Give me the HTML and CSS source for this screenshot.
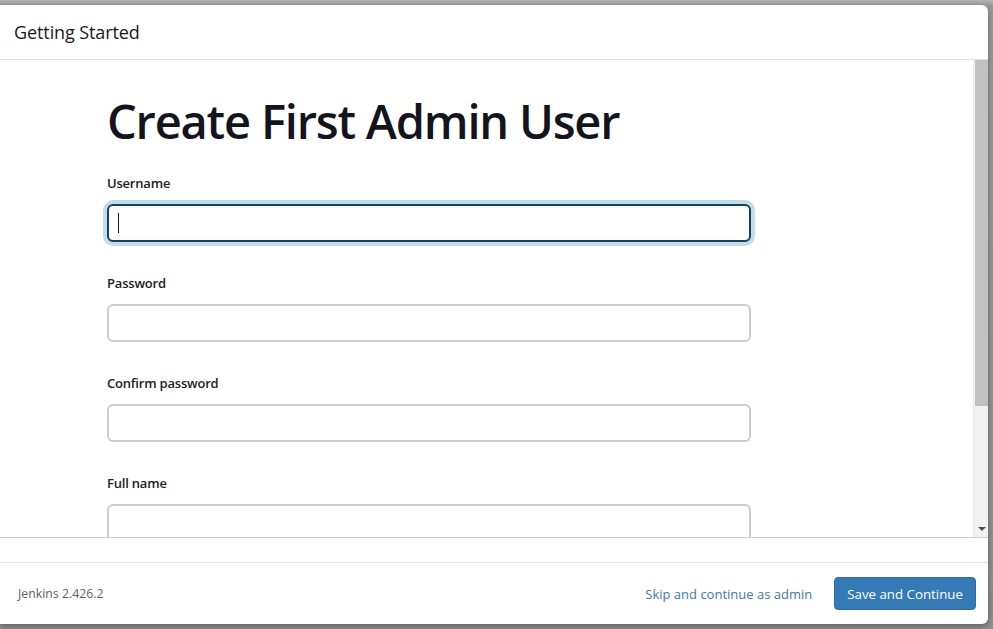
FILE: index.html
```html
<!DOCTYPE html>
<html lang="en">
<head>
<meta charset="utf-8">
<title>Getting Started</title>
<link rel="stylesheet" href="styles.css">
</head>
<body>
<div class="backdrop">
  <div class="wizard">
    <header class="wizard-header">
      <h4 class="wizard-title">Getting Started</h4>
    </header>

    <div class="wizard-body">
      <div class="wizard-content">
        <h1 class="page-title">Create First Admin User</h1>
        <form class="admin-form">
          <div class="field">
            <label class="field-label" for="username">Username</label>
            <div class="field-control">
              <input class="field-input is-focused" id="username" type="text">
              <span class="caret"></span>
            </div>
          </div>
          <div class="field">
            <label class="field-label" for="password1">Password</label>
            <input class="field-input" id="password1" type="password">
          </div>
          <div class="field">
            <label class="field-label" for="password2">Confirm password</label>
            <input class="field-input" id="password2" type="password">
          </div>
          <div class="field">
            <label class="field-label" for="fullname">Full name</label>
            <input class="field-input" id="fullname" type="text">
          </div>
        </form>
      </div>
      <div class="scrollbar">
        <div class="scrollbar-thumb"></div>
        <div class="scrollbar-track"></div>
        <div class="scrollbar-arrow"></div>
      </div>
    </div>

    <div class="wizard-gap"></div>

    <footer class="wizard-footer">
      <span class="version">Jenkins 2.426.2</span>
      <div class="actions">
        <a class="skip-link" href="#">Skip and continue as admin</a>
        <button class="btn-primary" type="button">Save and Continue</button>
      </div>
    </footer>
  </div>
</div>
</body>
</html>
```

FILE: styles.css
```css
* {
  box-sizing: border-box;
}

html, body {
  margin: 0;
  padding: 0;
  height: 100%;
  overflow: hidden;
}

body {
  background: #8f8f8f;
  font-family: "Open Sans", "Noto Sans", sans-serif;
  color: #16161f;
}

.backdrop {
  height: 100%;
  padding: 5px 5px 5px 0;
  background: linear-gradient(#b4b4b4, #9a9a9a 6px, #8f8f8f);
}

.wizard {
  height: 619px;
  background: #fff;
  border-radius: 0 6px 6px 0;
  box-shadow: 0 2px 6px rgba(0, 0, 0, 0.35);
  display: flex;
  flex-direction: column;
  overflow: hidden;
}

/* header */
.wizard-header {
  height: 55px;
  flex: none;
  border-bottom: 1px solid #e3e3e3;
  display: flex;
  align-items: center;
  padding: 0 14px;
}

.wizard-title {
  margin: 0;
  font-size: 18px;
  font-weight: 500;
  color: #1b1624;
  letter-spacing: -0.1px;
}

/* scrolling body */
.wizard-body {
  height: 478px;
  flex: none;
  display: flex;
  border-bottom: 1px solid #cfcfcf;
}

.wizard-content {
  flex: 1;
  overflow: hidden;
  padding: 29px 0 0 107px;
}

.page-title {
  margin: 0 0 20px;
  font-size: 47px;
  line-height: 64px;
  font-weight: 600;
  color: #14141f;
  letter-spacing: -1.2px;
}

.admin-form {
  width: 644px;
}

.field {
  margin-bottom: 31px;
}

.field-label {
  display: block;
  font-size: 13px;
  line-height: 20px;
  font-weight: 600;
  color: #1c1c24;
  margin-bottom: 11px;
  letter-spacing: -0.2px;
}

.field-control {
  position: relative;
}

.field-input {
  display: block;
  width: 100%;
  height: 38px;
  margin: 0;
  padding: 0 10px;
  border: 2px solid #cbcdce;
  border-radius: 6px;
  background: #fff;
  font: inherit;
  font-size: 14px;
  outline: none;
}

.field-input.is-focused {
  border-color: #0e4564;
  box-shadow: 0 0 0 4px #c4dbea;
  caret-color: transparent;
}

.caret {
  position: absolute;
  left: 11px;
  top: 9px;
  width: 1px;
  height: 20px;
  background: #111;
}

/* scrollbar column */
.scrollbar {
  width: 15px;
  flex: none;
  background: #f1f1f1;
  border-left: 1px solid #e9e9e9;
  display: flex;
  flex-direction: column;
  padding-left: 1px;
}

.scrollbar-thumb {
  height: 346px;
  background: #c1c1c1;
}

.scrollbar-track {
  flex: 1;
}

.scrollbar-arrow {
  height: 17px;
  display: flex;
  justify-content: center;
  align-items: center;
}

.scrollbar-arrow::before {
  content: "";
  width: 0;
  height: 0;
  border-left: 4px solid transparent;
  border-right: 4px solid transparent;
  border-top: 4px solid #505050;
}

.wizard-gap {
  height: 24px;
  flex: none;
}

/* footer */
.wizard-footer {
  flex: 1;
  border-top: 1px solid #e3e3e3;
  display: flex;
  align-items: center;
  justify-content: space-between;
  padding: 0 12px 0 18px;
}

.version {
  font-size: 12.3px;
  color: #5f5f66;
}

.actions {
  display: flex;
  align-items: center;
  gap: 22px;
}

.skip-link {
  font-size: 13px;
  color: #3d79b0;
  text-decoration: none;
}

.btn-primary {
  height: 33px;
  padding: 0 12px;
  border: 1px solid #2e6da4;
  border-radius: 4px;
  background: #337ab7;
  color: #fff;
  font: inherit;
  font-size: 13.3px;
  cursor: pointer;
}
```
